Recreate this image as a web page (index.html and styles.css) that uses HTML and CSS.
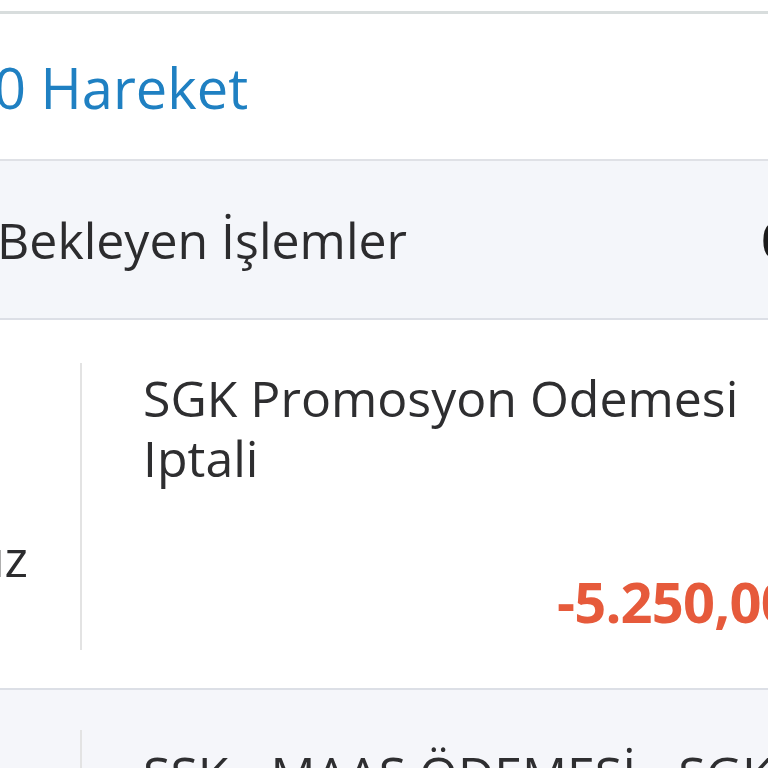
FILE: index.html
```html
<!DOCTYPE html>
<html lang="tr">
<head>
<meta charset="utf-8">
<link rel="stylesheet" href="styles.css">
</head>
<body>
<div class="page">
  <div class="topbar"></div>
  <div class="summary"><span class="count-link">0 Hareket</span></div>
  <div class="pending">
    <span class="pending-title">Bekleyen İşlemler</span>
    <span class="pending-count">0</span>
  </div>
  <div class="tx">
    <div class="tx-date"><span>Temmuz</span></div>
    <div class="tx-body">
      <div class="tx-title">SGK Promosyon Odemesi<br>Iptali</div>
      <div class="tx-amount">-5.250,00 TL</div>
    </div>
  </div>
  <div class="tx tx-alt">
    <div class="tx-date tx-date-alt"><span>Temmuz</span></div>
    <div class="tx-body">
      <div class="tx-title tx-title-alt">SSK - MAAŞ ÖDEMESİ - SGK</div>
    </div>
  </div>
</div>
</body>
</html>
```
FILE: styles.css
```css
html, body {
  margin: 0;
  padding: 0;
  background: #fff;
}
body {
  width: 768px;
  height: 768px;
  overflow: hidden;
  font-family: "Open Sans", "Noto Sans", sans-serif;
  color: #2c2c2e;
}
.page {
  width: 768px;
}
.topbar {
  height: 11px;
  border-bottom: 3px solid #d8dddd;
}
.summary {
  height: 145px;
  display: flex;
  align-items: center;
  border-bottom: 2px solid #dfe1e6;
}
.count-link {
  font-size: 56px;
  line-height: 70px;
  color: #1f80c2;
  margin-left: -6px;
  white-space: nowrap;
}
.pending {
  height: 157px;
  background: #f4f6fa;
  border-bottom: 2px solid #dcdfe6;
  display: flex;
  align-items: center;
  justify-content: space-between;
}
.pending-title {
  font-size: 50px;
  line-height: 60px;
  margin-left: -3px;
  white-space: nowrap;
}
.pending-count {
  font-size: 50px;
  line-height: 60px;
  font-weight: 700;
  color: #1c1c1c;
  margin-right: -22px;
}
.tx {
  display: flex;
  border-bottom: 2px solid #dcdfe6;
  background: #fff;
}
.tx-alt {
  background: #f5f6fa;
  border-bottom: 0;
  height: 120px;
}
.tx-date {
  width: 80px;
  flex-shrink: 0;
  margin: 43px 0 38px;
  border-right: 2px solid #e3e3e3;
  display: flex;
  align-items: flex-end;
  justify-content: flex-end;
  overflow: hidden;
  padding-bottom: 62px;
}
.tx-date span {
  font-size: 50px;
  line-height: 60px;
  margin-right: 52px;
  white-space: nowrap;
}
.tx-date-alt {
  margin-top: 40px;
}
.tx-body {
  padding: 48px 0 52px 61px;
  flex: 1;
  min-width: 0;
}
.tx-title {
  font-size: 50px;
  line-height: 60px;
  color: #2e2e30;
  white-space: nowrap;
}
.tx-title-alt {
  margin-top: 6px;
}
.tx-amount {
  margin-top: 78px;
  margin-left: 414px;
  font-size: 56px;
  line-height: 70px;
  font-weight: 700;
  letter-spacing: -0.8px;
  color: #e65a3b;
  white-space: nowrap;
}
```
